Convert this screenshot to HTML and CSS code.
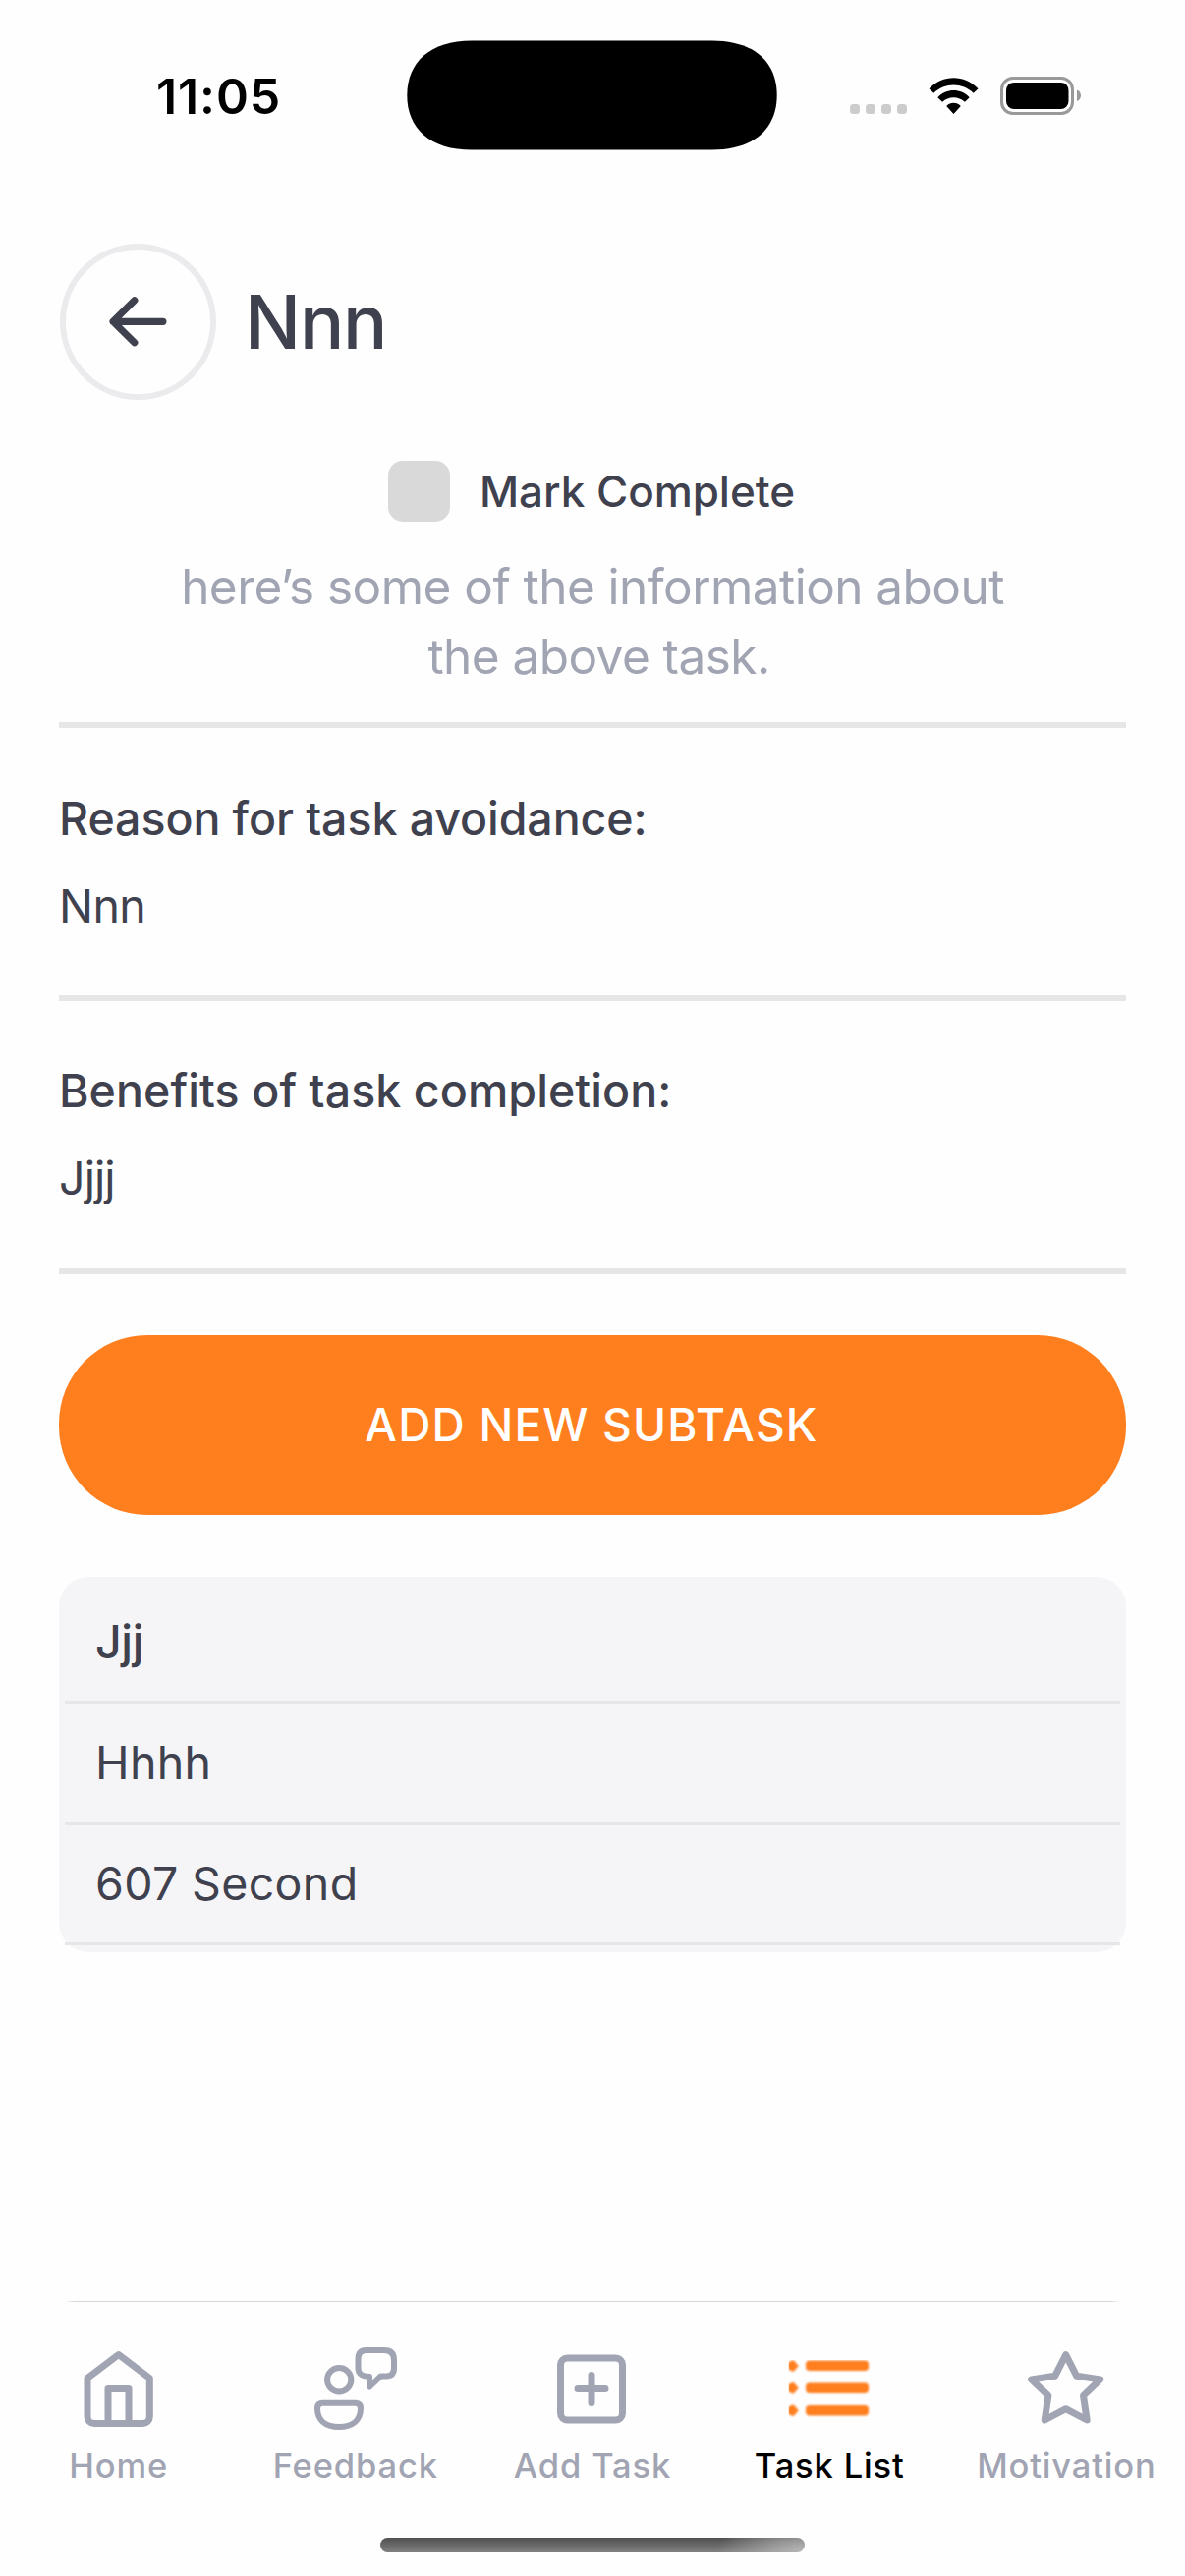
FILE: index.html
```html
<!DOCTYPE html>
<html lang="en">
<head>
<meta charset="utf-8">
<title>Task details</title>
<link rel="stylesheet" href="styles.css">
</head>
<body>
<div class="status">
  <span class="time">11:05</span>
  <svg class="island" width="377" height="112" viewBox="0 0 377 112"><path d="M66 .4H311C353 .4 376.700 22 376.700 56S353 111.600 311 111.600H66C24 111.600 .3 90 .3 56S24 .4 66 .4Z"/></svg>
  <div class="indicators">
    <svg class="cell" width="58" height="10" viewBox="0 0 58 10" fill="#ccc"><rect width="10" height="10" rx="3.500"/><rect x="16" width="10" height="10" rx="3.500"/><rect x="32" width="10" height="10" rx="3.500"/><rect x="48" width="10" height="10" rx="3.500"/></svg>
    <svg class="wifi" width="51" height="38" viewBox="0 0 51 38"><path d="M.5 11.200C14.500-3.400 36.500-3.400 50.500 11.200L45.700 15.800C34.500 4.800 16.500 4.800 5.300 15.800ZM9.300 20.200C18.200 10.700 32.800 10.700 41.700 20.200L36.900 24.800C30.500 18.700 20.500 18.700 14.100 24.800ZM18.200 29C22.300 24.700 28.700 24.700 32.800 29L25.500 37Z"/></svg>
    <svg width="83" height="39" viewBox="0 0 83 39"><rect x="1.500" y="1.500" width="72" height="36" rx="11.500" fill="none" stroke="#999" stroke-width="3"/><rect x="6" y="6" width="63.500" height="27" rx="8"/><path d="M78 13.500C83.300 15.500 83.300 23 78 25Z" fill="#999"/></svg>
  </div>
</div>

<main>
  <header>
    <button class="back" aria-label="Back"><svg width="66" height="58" viewBox="0 0 66 58" fill="none" stroke="#3f414e" stroke-width="7.200" stroke-linecap="round" stroke-linejoin="round"><path d="M57.900 28.300H7.100M28.800 6.800L7.100 28.300L28.800 49.800"/></svg></button>
    <h1>Nnn</h1>
  </header>
  <label class="complete"><span class="box"></span><span class="complete-text">Mark Complete</span></label>
  <p class="info">here’s some of the information about<br><span class="info-end">the above task.</span></p>
  <section>
    <h2 class="reason">Reason for task avoidance:</h2>
    <p>Nnn</p>
  </section>
  <section class="benefits">
    <h2 class="benefit">Benefits of task completion:</h2>
    <p>Jjjj</p>
  </section>
  <button class="add">ADD NEW SUBTASK</button>
  <ul class="subtask">
    <li class="name">Jjj</li>
    <li>Hhhh</li>
    <li class="duration">607 Second</li>
  </ul>
</main>

<footer>
  <nav>
    <a><svg viewBox="0 0 84 84"><path d="M10 31.500L41.700 7.500L73.300 31.500V70.500A7 7 0 0 1 66.300 77.500H17A7 7 0 0 1 10 70.500ZM31 77V42.500H52V77"/></svg><span class="label">Home</span></a>
    <a><svg class="soft" viewBox="0 0 84 84"><circle cx="25.200" cy="33.300" r="12.200"/><path d="M8 56.700H42Q47 57 47 62C47 74 39 81 25 81S3 74 3 62Q3 57 8 56.700ZM52.500 3H71Q81 3 81 13V21Q81 29.500 73 29.500H67.500L56 40.500V30C48 29.500 44.500 27 44.500 21V12Q44.500 3 52.500 3Z"/></svg><span class="label">Feedback</span></a>
    <a><svg viewBox="0 0 84 84"><rect x="9.500" y="11" width="63" height="63" rx="7"/><path d="M41 28.500V56.500M27 42.500H55"/></svg><span class="label">Add Task</span></a>
    <a class="active"><svg class="soft list" viewBox="0 0 84 84"><rect x="18" y="13.500" width="64" height="10.500" rx="4"/><rect x="18" y="36.500" width="64" height="10.500" rx="4"/><rect x="18" y="59" width="64" height="10.500" rx="4"/><path d="M-1 16L5.500 13L10.800 19L5.500 25L-1 22ZM-1 38.700L5.500 35.700L10.800 41.700L5.500 47.700L-1 44.700ZM-1 61.300L5.500 58.300L10.800 64.300L5.500 70.300L-1 67.300Z"/></svg><span class="label">Task List</span></a>
    <a><svg viewBox="0 0 84 84"><path d="M41.700 7.700L52.700 29.300L76.800 33L59.500 49.500L63.200 74L41.700 62.700L20.200 74L23.900 49.500L6.600 33L30.700 29.300Z"/></svg><span class="label">Motivation</span></a>
  </nav>
  <div class="home-bar"></div>
</footer>
</body>
</html>
```
FILE: styles.css
```css
* {
  box-sizing: border-box;
}

body {
  margin: 0;
  height: 2622px;
  display: flex;
  flex-direction: column;
  background: #fefefe;
  color: #3f414e;
  font-family: Inter, "Liberation Sans", sans-serif;
  overflow: hidden;
}

svg {
  display: block;
}

h1,
h2,
p,
ul {
  margin: 0;
  padding: 0;
  font-weight: 400;
}

button {
  font: inherit;
  border: 0;
  padding: 0;
}

.status {
  height: 160px;
  display: grid;
  grid-template-columns: 414px 378px 1fr;
  color: #000;
}

.time {
  padding-left: 159px;
  font-size: 50px;
  line-height: 196px;
  font-weight: 600;
  letter-spacing: 0.900px;
}

.island {
  margin-top: 41px;
}

.indicators {
  display: flex;
  height: 39px;
  margin: 78px 0 0 73px;
}

.cell {
  margin: 28px 22px 0 0;
}

.wifi {
  margin: 1px 22px 0 0;
}

main {
  padding: 88px 60px 0;
}

header {
  display: flex;
  align-items: center;
  gap: 29px;
  padding-left: 1px;
}

.back {
  width: 159px;
  height: 159px;
  border: 6px solid #ebebed;
  border-radius: 50%;
  background: none;
  display: grid;
  place-items: center;
}

h1 {
  font-size: 75.500px;
  line-height: 90px;
  font-weight: 500;
  letter-spacing: -1.200px;
}

.complete {
  display: flex;
  align-items: center;
  justify-content: center;
  gap: 30px;
  height: 62px;
  margin-top: 62px;
  padding-right: 2px;
  font-size: 44px;
  font-weight: 500;
  letter-spacing: -0.050px;
}

.box {
  width: 63px;
  height: 62px;
  border-radius: 15px;
  background: #d9d9d9;
}

.info {
  margin-top: 31px;
  padding-bottom: 31px;
  border-bottom: 6px solid #e6e6e6;
  text-align: center;
  color: #a1a4b2;
  font-size: 49.500px;
  line-height: 71px;
  letter-spacing: -0.550px;
  white-space: nowrap;
}

.info-end {
  padding-left: 13px;
}

section {
  height: 278px;
  padding-top: 62px;
  border-bottom: 6px solid #e6e6e6;
  font-size: 46.500px;
  line-height: 60px;
  letter-spacing: -0.600px;
}

.benefits {
  padding-top: 61px;
  letter-spacing: -0.900px;
}

h2 {
  font-size: inherit;
  font-weight: 500;
  margin-bottom: 29px;
}

.reason {
  letter-spacing: -0.080px;
}

.benefit {
  letter-spacing: 0.080px;
}

.add {
  display: block;
  width: 100%;
  height: 183px;
  margin-top: 62px;
  padding: 0 2px 2px 0;
  border-radius: 90px;
  background: #ff7f1f;
  color: #fff;
  font-size: 46px;
  font-weight: 500;
  letter-spacing: 1.200px;
}

.subtask {
  margin-top: 63px;
  padding: 7px 6px;
  border-radius: 30px;
  background: #f5f5f8;
  list-style: none;
  font-size: 46.500px;
  letter-spacing: 0.350px;
}

.subtask li {
  height: 124px;
  padding-left: 31px;
  border-bottom: 3px solid #e6e6e6;
  line-height: 121px;
}

.subtask .name {
  height: 122px;
  line-height: 119px;
  font-weight: 500;
  letter-spacing: -0.400px;
}

.subtask .duration {
  height: 122px;
  line-height: 119px;
}

footer {
  margin-top: auto;
  height: 280px;
}

nav {
  height: 241px;
  display: grid;
  grid-template-columns: repeat(5, 1fr);
  padding-top: 47px;
  background: linear-gradient(90deg, transparent, #d6d6d8 10px, #d6d6d8 1064px, transparent) 66px 0 / 1074px 1px no-repeat;
}

nav a {
  display: flex;
  flex-direction: column;
  align-items: center;
  gap: 17px;
  color: #a1a4b2;
  font-size: 34.500px;
  line-height: 40px;
  font-weight: 500;
  letter-spacing: 0.850px;
}

nav svg {
  width: 84px;
  height: 84px;
  fill: none;
  stroke: currentColor;
  stroke-width: 7;
  stroke-linejoin: round;
  stroke-linecap: round;
}

nav .soft {
  stroke-width: 6;
  filter: blur(0.700px);
}

nav .list {
  fill: #ff7f1f;
  stroke: none;
  filter: blur(1px);
  clip-path: inset(13px 0 13px 0.500px);
}

nav .active {
  color: #000;
}

.home-bar {
  width: 432px;
  height: 15px;
  margin: 0 auto;
  border-radius: 8px;
  background: radial-gradient(90px 40px at 100% 100%, rgba(190, 190, 190, 0.900), transparent), linear-gradient(#505050, #808080);
}
```
